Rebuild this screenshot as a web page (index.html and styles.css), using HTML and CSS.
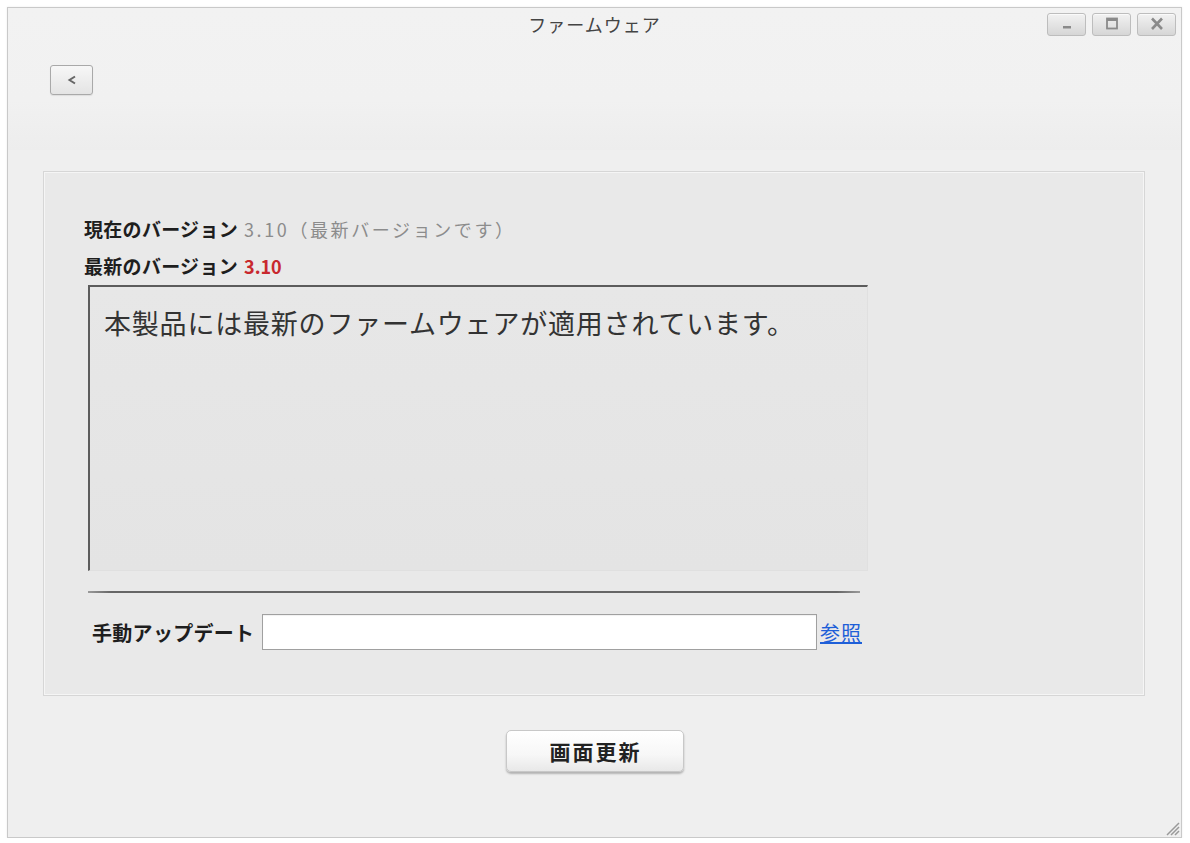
FILE: index.html
```html
<!DOCTYPE html>
<html lang="ja">
<head>
<meta charset="utf-8">
<title>ファームウェア</title>
<link rel="stylesheet" href="styles.css">
</head>
<body>
<div class="window">
  <div class="header">
    <div class="titlebar">
      <div class="spacer"></div>
      <div class="title">ファームウェア</div>
      <div class="controls">
        <div class="ctl"><svg width="16" height="14" viewBox="0 0 16 14"><rect x="4" y="9" width="8" height="2.5" fill="#8a8a8a"/></svg></div>
        <div class="ctl"><svg width="16" height="14" viewBox="0 0 16 14"><rect x="3" y="1.5" width="10" height="10" fill="none" stroke="#8a8a8a" stroke-width="1.8"/><rect x="3" y="1.5" width="10" height="2.5" fill="#8a8a8a"/></svg></div>
        <div class="ctl"><svg width="16" height="14" viewBox="0 0 16 14"><path d="M3 1.5 L13 12 M13 1.5 L3 12" stroke="#8a8a8a" stroke-width="2.6"/></svg></div>
      </div>
    </div>
    <div class="backrow">
      <div class="back"><svg width="12" height="12" viewBox="0 0 12 12"><path d="M9 2.5 L3.5 6 L9 9.5" fill="none" stroke="#666" stroke-width="2"/></svg></div>
    </div>
  </div>

  <div class="panel">
    <div class="ver"><span class="lbl">現在のバージョン</span><span class="gray">3.10（最新バージョンです）</span></div>
    <div class="ver second"><span class="lbl">最新のバージョン</span><span class="red">3.10</span></div>
    <div class="msgbox">本製品には最新のファームウェアが適用されています。</div>
    <div class="sep"></div>
    <div class="manual">
      <span class="mlabel">手動アップデート</span>
      <div class="input"></div>
      <a class="link" href="#">参照</a>
    </div>
  </div>

  <div class="footer">
    <div class="refresh">画面更新</div>
  </div>

  <svg class="grip" width="20" height="20" viewBox="0 0 20 20">
    <path d="M19 7 L7 19 M19 11 L11 19 M19 15 L15 19" stroke="#9a9a9a" stroke-width="1.5"/>
  </svg>
</div>
</body>
</html>
```

FILE: styles.css
```css
* { box-sizing: border-box; }
html, body { margin: 0; padding: 0; background: #ffffff; }
body {
  font-family: "Noto Sans CJK JP", "Liberation Sans", sans-serif;
  color: #333;
}
.window {
  position: relative;
  margin: 7px 0 0 7px;
  width: 1175px;
  height: 831px;
  border: 1px solid #c9c9c9;
  background: #efefef;
  box-shadow: 0 0 2px rgba(0,0,0,0.08);
}
.header {
  height: 142px;
  background: linear-gradient(#f2f2f2 0%, #f1f1f1 65%, #ededed 100%);
}
.titlebar {
  height: 32px;
  display: grid;
  grid-template-columns: 1fr auto 1fr;
  align-items: center;
}
.title {
  font-size: 18px;
  letter-spacing: 1px;
  color: #444;
  line-height: 24px;
}
.controls {
  justify-self: end;
  display: flex;
  gap: 6px;
  padding-right: 5px;
}
.ctl {
  width: 39px;
  height: 23px;
  border: 1px solid #bdbdbd;
  border-radius: 3px;
  background: linear-gradient(#f2f2f2, #d6d6d6);
  display: flex;
  align-items: center;
  justify-content: center;
  box-shadow: inset 0 1px 0 #fafafa;
}
.backrow {
  padding: 25px 0 0 42px;
}
.back {
  width: 43px;
  height: 30px;
  border: 1px solid #a9a9a9;
  border-radius: 3px;
  background: linear-gradient(#f7f7f7, #e4e4e4);
  display: flex;
  align-items: center;
  justify-content: center;
  box-shadow: 0 1px 1px rgba(0,0,0,0.08);
}
.panel {
  margin: 21px 36px 0 35px;
  border: 1px solid #d6d6d6;
  box-shadow: inset 0 0 0 1px #f5f5f5;
  background: #e9e9e9;
  padding: 45px 40px 45px 40px;
}
.ver {
  height: 24px;
  line-height: 24px;
  white-space: nowrap;
}
.ver.second { margin-top: 13px; }
.lbl {
  font-size: 19px;
  font-weight: 700;
  letter-spacing: 0.3px;
  color: #1e1e1e;
}
.gray {
  margin-left: 6px;
  font-size: 18px;
  color: #8c8c8c;
  letter-spacing: 2.6px;
}
.red {
  margin-left: 6px;
  font-size: 18px;
  color: #c8282e;
  font-weight: 700;
  letter-spacing: 0;
}
.msgbox {
  margin: 7px 0 0 4px;
  width: 780px;
  height: 286px;
  border-top: 2px solid #5c5c5c;
  border-left: 2px solid #5c5c5c;
  border-right: 1px solid #e0e0e0;
  border-bottom: 1px solid #e0e0e0;
  background: linear-gradient(#e7e7e7, #e4e4e4);
  padding: 18px 0 0 14px;
  font-size: 27px;
  line-height: 36px;
  letter-spacing: 0.8px;
  color: #333;
  white-space: nowrap;
}
.sep {
  margin: 20px 0 0 4px;
  width: 772px;
  height: 2px;
  background: linear-gradient(90deg, #9a9a9a, #666 3%, #666 97%, #9a9a9a);
}
.manual {
  margin-top: 21px;
  height: 36px;
  display: flex;
  align-items: center;
  padding-left: 8px;
}
.mlabel {
  font-size: 20px;
  font-weight: 700;
  letter-spacing: 0.3px;
  color: #1e1e1e;
  white-space: nowrap;
  width: 170px;
}
.input {
  width: 555px;
  height: 36px;
  background: #fff;
  border: 1px solid #a0a0a0;
  box-shadow: inset 0 1px 1px rgba(0,0,0,0.06);
}
.link {
  margin-left: 3px;
  font-size: 20px;
  letter-spacing: 1px;
  color: #1e5fd8;
  text-decoration: underline;
  white-space: nowrap;
}
.footer {
  padding-top: 34px;
  display: flex;
  justify-content: center;
}
.refresh {
  width: 178px;
  height: 42px;
  border: 1px solid #c8c8c8;
  border-radius: 5px;
  background: linear-gradient(#ffffff 0%, #f7f7f7 60%, #e8e8e8 100%);
  box-shadow: 0 2px 2px rgba(0,0,0,0.25);
  display: flex;
  align-items: center;
  justify-content: center;
  font-size: 21px;
  letter-spacing: 2px;
  padding-left: 2px;
  color: #222;
  font-weight: 700;
}
.grip {
  position: absolute;
  right: 1px;
  bottom: 1px;
}
```
